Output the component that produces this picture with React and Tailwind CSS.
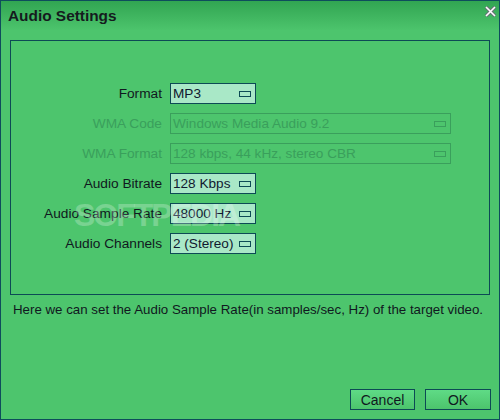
const rows = [
  { label: "Format", value: "MP3", width: "w-[86px]" },
  { label: "WMA Code", value: "Windows Media Audio 9.2", width: "w-[281px]", disabled: true },
  { label: "WMA Format", value: "128 kbps, 44 kHz, stereo CBR", width: "w-[281px]", disabled: true },
  { label: "Audio Bitrate", value: "128 Kbps", width: "w-[86px]" },
  { label: "Audio Sample Rate", value: "48000 Hz", width: "w-[86px]" },
  { label: "Audio Channels", value: "2 (Stereo)", width: "w-[86px]" },
];

const Select = ({ value, width, disabled }) => (
  <div
    className={`${width} h-[21px] flex items-center justify-between pl-[2px] pr-[4px] border text-[13.6px] ${
      disabled
        ? "border-[#3a9f5c] text-[#3a9f5c]"
        : "border-[#0d4a55] bg-[#a9e8c7] text-[#101830]"
    }`}
  >
    <span className="leading-none whitespace-nowrap">{value}</span>
    <span
      className={`shrink-0 w-[12px] h-[6px] border ${disabled ? "border-[#3a9f5c]" : "border-[#0d4a55]"}`}
    ></span>
  </div>
);

const App = () => {
  return (
    <div
      className="relative w-[500px] h-[420px] flex flex-col border border-[#0e4d5c] bg-[#4dc56d] text-[13.3px] overflow-hidden"
      style={{ fontFamily: '"Liberation Sans", Arial, sans-serif' }}
    >
      <div className="h-[29px] flex items-center justify-between pl-[7px] pr-[3px] bg-gradient-to-b from-[#31a552] to-[#4cc46c]">
        <span className="text-[15.4px] font-bold text-[#151b1e]">Audio Settings</span>
        <span className="w-[11px] h-[11px] flex items-center justify-center mb-[9px]">
          <svg width="11" height="11" viewBox="0 0 11 11">
            <path d="M1 1 L10 10 M10 1 L1 10" stroke="#6a7078" strokeWidth="3.4" />
            <path d="M1 1 L10 10 M10 1 L1 10" stroke="#ffffff" strokeWidth="1.6" />
          </svg>
        </span>
      </div>

      <div className="mx-[9px] mt-[10px] h-[255px] border border-[#0d4a55] pt-[42px] flex flex-col gap-[9px]">
        {rows.map((r) => (
          <div key={r.label} className="flex items-center h-[21px]">
            <span
              className={`w-[152px] text-right pr-[1px] text-[13.7px] leading-[21px] whitespace-nowrap ${r.disabled ? "text-[#3a9f5c]" : "text-[#101820]"}`}
            >
              {r.label}
            </span>
            <span className="w-[7px]"></span>
            <Select value={r.value} width={r.width} disabled={r.disabled} />
          </div>
        ))}
      </div>

      <p className="mt-[5px] pl-[12px] text-[#101820] whitespace-nowrap">
        Here we can set the Audio Sample Rate(in samples/sec, Hz) of the target video.
      </p>

      <div className="mt-auto mb-[9px] mr-[8px] flex justify-end gap-[10px] text-[14px]">
        <button className="w-[65px] h-[21px] border border-[#0d4a55] bg-gradient-to-b from-[#5fdb86] to-[#4cc46c] text-[#101820]">
          Cancel
        </button>
        <button className="w-[66px] h-[21px] border border-[#0d4a55] bg-gradient-to-b from-[#5fdb86] to-[#4cc46c] text-[#101820]">
          OK
        </button>
      </div>

      <span className="absolute left-[73px] top-[198px] text-[32px] leading-none font-bold tracking-[-2px] text-white/25 pointer-events-none">
        SOFTPEDIA
      </span>
    </div>
  );
};

export default App;
